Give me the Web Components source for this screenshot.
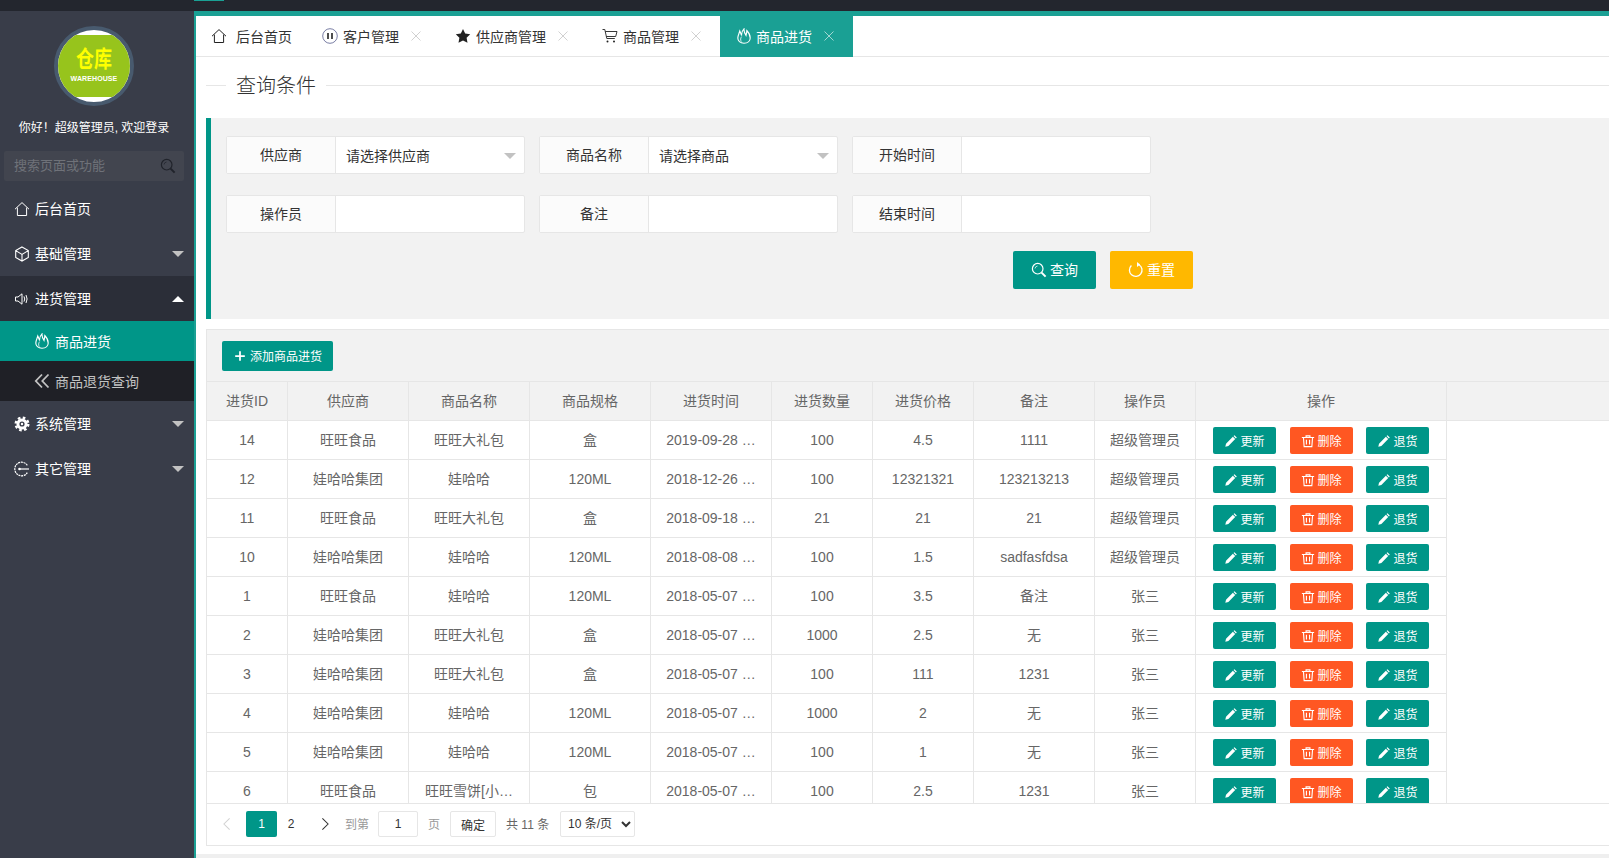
<!DOCTYPE html>
<html lang="zh-CN">
<head>
    <meta charset="UTF-8">
    <title>商品进货</title>
    <style>
        html, body {
            margin: 0;
            height: 100%;
            overflow: hidden;
            font-family: "Liberation Sans", "Noto Sans CJK SC", sans-serif;
            font-size: 14px;
            background: #fff;
        }
    </style>
</head>
<body>
    <admin-layout>
        <side-nav slot="side">
            <side-item icon="home" label="后台首页"></side-item>
            <side-item icon="cube" label="基础管理" arrow="down"></side-item>
            <side-item icon="speaker" label="进货管理" arrow="up" state="open"></side-item>
            <side-item icon="flame" label="商品进货" state="active"></side-item>
            <side-item icon="back" label="商品退货查询" state="child"></side-item>
            <side-item icon="gear" label="系统管理" arrow="down"></side-item>
            <side-item icon="other" label="其它管理" arrow="down"></side-item>
        </side-nav>

        <tab-strip>
            <tab-item icon="home" gap="9" style="padding-left:15px;padding-right:14px">后台首页</tab-item>
            <tab-item icon="pause" closable>客户管理</tab-item>
            <tab-item icon="star" closable>供应商管理</tab-item>
            <tab-item icon="cart" closable style="padding-right:18px">商品管理</tab-item>
            <tab-item icon="flame" gap="4" closable active style="padding-right:18px">商品进货</tab-item>
        </tab-strip>

        <section-title>查询条件</section-title>

        <query-panel>
            <form-field label="供应商" value="请选择供应商" select></form-field>
            <form-field label="商品名称" value="请选择商品" select></form-field>
            <form-field label="开始时间"></form-field>
            <form-field label="操作员"></form-field>
            <form-field label="备注"></form-field>
            <form-field label="结束时间"></form-field>
            <ui-button slot="actions" icon="search" color="#009688" size="lg">查询</ui-button>
            <ui-button slot="actions" icon="refresh" color="#ffb800" size="lg">重置</ui-button>
        </query-panel>

        <stock-table></stock-table>
    </admin-layout>

    <script>
        // 所有图标都放在这里，viewBox 统一 16x16
        const ICONS = {
            home: '<path d="M1 8.2 8 1.6l7 6.6M3.4 6.6v7.9h9.2V6.6" fill="none" stroke="currentColor"/>',
            cube: '<path d="M8 1l6.3 3.6v6.8L8 15l-6.3-3.6V4.6zM1.7 4.6 8 8.4l6.3-3.8M8 8.4V15" fill="none" stroke="currentColor" stroke-width="1.1"/>',
            speaker: '<path d="M1.5 6H4l4-3.2v10.4L4 10H1.5zM10 5.4q1.5 2.6 0 5.2M12 4q2.2 4 0 8" fill="none" stroke="currentColor"/>',
            flame: '<path d="M8 15.300C4 15.300 1.800 12.800 1.800 10 1.800 7.500 3.200 5.500 3.800 3 4.500 4.500 5 6 5.600 7.500 5.400 4.800 6.200 2.600 8 .8 7.800 3 8.800 5.500 10 7.500 10.400 5.800 10.800 4 10.800 2.500 13 4.800 14.200 7.400 14.200 10 14.200 12.800 12 15.300 8 15.300Z" fill="none" stroke="currentColor" stroke-width="1.100"/><path d="M5.300 13.600C4.200 11.800 4.600 10 5.600 8.600" fill="none" stroke="currentColor" stroke-width=".8"/>',
            back: '<path d="M8 1.500 1.800 8 8 14.500M14.500 1.500 8.300 8l6.200 6.500" fill="none" stroke="currentColor" stroke-width="1.800"/>',
            gear: '<circle cx="8" cy="8" r="4.100" fill="none" stroke="currentColor" stroke-width="3"/><circle cx="8" cy="8" r="6.300" fill="none" stroke="currentColor" stroke-width="2.400" stroke-dasharray="2.600 2.350"/><circle cx="8" cy="8" r="1.200" fill="currentColor"/>',
            other: '<path d="M13.300 4.300A6.800 6.800 0 1 0 13.300 11.700" fill="none" stroke="currentColor" stroke-width="1.200" stroke-dasharray="2 .7"/><path d="M5 8h10" stroke="currentColor" stroke-width="1.200"/><circle cx="5.500" cy="8" r="1.300" fill="currentColor"/>',
            pause: '<circle cx="8" cy="8" r="7.300" fill="none" stroke="#6a6f9a" stroke-width=".9"/><path d="M6 5v6M10 5v6" stroke="#222" stroke-width="1.600"/>',
            star: '<path d="M8 1l2.200 4.600 5 .7-3.600 3.500.9 5L8 12.400l-4.500 2.400.9-5L.8 6.300l5-.7z" fill="currentColor"/>',
            cart: '<path d="M.5 1.500h2.300l2 9h8M3.300 3.500h11.700l-1.300 5H4.400" fill="none" stroke="currentColor" stroke-width=".9"/><circle cx="5.500" cy="13.500" r="1" fill="currentColor"/><circle cx="12" cy="13.500" r="1" fill="currentColor"/>',
            search: '<circle cx="6.700" cy="6.700" r="5.300" fill="none" stroke="currentColor" stroke-width="1.200"/><path d="M4 6.500A3 3 0 0 1 6.500 4" fill="none" stroke="currentColor" stroke-width=".7"/><path d="M10.600 10.600l4 4" stroke="currentColor" stroke-width="2"/>',
            refresh: '<path d="M11 2.700A6.300 6.300 0 1 1 3.400 3.500" fill="none" stroke="currentColor" stroke-width="1.300"/><path d="M9 0v5l3.200-2.500z" fill="currentColor"/>',
            plus: '<path d="M8 2.500v11M2.500 8h11" stroke="currentColor" stroke-width="2"/>',
            pen: '<path d="M1.500 14.500l.8-3.500 7.800-7.900 2.700 2.700-7.800 7.900zM10.900 2.300l1-1 2.700 2.700-1 1z" fill="currentColor"/>',
            trash: '<path d="M1 4h14M5.800 4V2.200h4.400V4M2.800 4l.8 10.500h8.800l.8-10.500M6.200 6.500v5.500M9.800 6.500v5.500" fill="none" stroke="currentColor" stroke-width="1.300"/>',
            close: '<path d="M2 2l12 12M14 2 2 14" stroke="currentColor"/>',
            left: '<path d="M11 1.500 4.500 8l6.500 6.500" fill="none" stroke="currentColor" stroke-width="1.200"/>',
            right: '<path d="M5 1.500 11.500 8 5 14.500" fill="none" stroke="currentColor" stroke-width="1.200"/>'
        };

        class UiIcon extends HTMLElement {
            connectedCallback() {
                const size = this.getAttribute('size') || 16;
                this.attachShadow({ mode: 'open' }).innerHTML = `
                    <style>
                        :host { display: inline-flex; width: ${size}px; height: ${size}px; flex: none; }
                        svg { width: 100%; height: 100%; display: block; }
                    </style>
                    <svg viewBox="0 0 16 16">${ICONS[this.getAttribute('name')] || ''}</svg>`;
            }
        }

        class AdminLayout extends HTMLElement {
            constructor() {
                super();
                this.attachShadow({ mode: 'open' }).innerHTML = `
                    <style>
                        :host { display: grid; grid-template: 11px 847px / 194px 1415px; background: #fff; color: #333; }
                        .top { grid-column: 1 / 3; background: #23262e; }
                        .top i { display: block; width: 30px; height: 1px; margin-left: 194px; background: #1aa094; }
                        .main { border-left: 2px solid #1aa094; overflow: hidden; display: flex; flex-direction: column; }
                        .foot { flex: none; height: 4px; margin-top: auto; background: #efefef; }
                    </style>
                    <div class="top"><i></i></div>
                    <slot name="side"></slot>
                    <div class="main"><slot></slot><div class="foot"></div></div>`;
            }
        }

        class SideNav extends HTMLElement {
            constructor() {
                super();
                this.attachShadow({ mode: 'open' }).innerHTML = `
                    <style>
                        :host { display: block; background: #393d49; color: #fff; }
                        .logo { width: 72px; height: 72px; margin: 0 0 0 54px; border: 4px solid #485a6e; border-radius: 50%; background: #fff; overflow: hidden; position: relative; top: 15px; }
                        .logo div { margin-top: 5px; height: 62px; background: #97c41c; display: flex; flex-direction: column; align-items: center; }
                        .logo b { color: #ffff00; font-size: 18px; line-height: 24px; margin-top: 12px; transform: scaleY(1.25); }
                        .logo span { color: #fff; font: bold 7px/8px "Liberation Sans", sans-serif; margin-top: 4px; letter-spacing: .1px; }
                        .hello { margin: 28px 0 0; padding-right: 6px; height: 18px; line-height: 18px; text-align: center; font-size: 12px; }
                        .search { margin: 14px 10px 5px 4px; height: 30px; background: #42454f; border-radius: 2px; display: flex; align-items: center; justify-content: space-between; padding: 0 8px 0 10px; color: #6f7279; font-size: 13px; }
                        .search span { margin-bottom: 3px; }
                        .search ui-icon { color: #20232b; }
                    </style>
                    <div class="logo"><div><b>仓库</b><span>WAREHOUSE</span></div></div>
                    <p class="hello">你好！超级管理员, 欢迎登录</p>
                    <div class="search"><span>搜索页面或功能</span><ui-icon name="search" size="16"></ui-icon></div>
                    <slot></slot>`;
            }
        }

        class SideItem extends HTMLElement {
            connectedCallback() {
                const state = this.getAttribute('state') || '';
                const arrow = this.getAttribute('arrow');
                const sub = state === 'active' || state === 'child';
                const bg = { open: '#2b2e38', active: '#009688', child: '#1f2026' }[state] || 'transparent';
                this.attachShadow({ mode: 'open' }).innerHTML = `
                    <style>
                        :host { display: flex; align-items: center; box-sizing: border-box; height: ${sub ? 40 : 45}px; padding-left: ${sub ? 34 : 14}px; background: ${bg}; color: ${state === 'child' ? '#c2c2c2' : '#fff'}; }
                        span { margin-left: 5px; line-height: 20px; margin-top: ${sub ? 2 : 0}px; }
                        .arrow { margin-left: auto; margin-right: 10px; width: 0; height: 0; border: 6px solid transparent; }
                        .down { border-top-color: #c2c2c2; border-bottom: 0; }
                        .up { border-bottom-color: #fff; border-top: 0; }
                    </style>
                    <ui-icon name="${this.getAttribute('icon')}"></ui-icon>
                    <span>${this.getAttribute('label')}</span>
                    ${arrow ? `<i class="arrow ${arrow}"></i>` : ''}`;
            }
        }

        class TabStrip extends HTMLElement {
            constructor() {
                super();
                this.attachShadow({ mode: 'open' }).innerHTML = `
                    <style>
                        :host { display: flex; flex: none; box-sizing: border-box; height: 46px; border-top: 5px solid #1aa094; border-bottom: 1px solid #e6e6e6; }
                    </style>
                    <slot></slot>`;
            }
        }

        class TabItem extends HTMLElement {
            connectedCallback() {
                const active = this.hasAttribute('active');
                this.attachShadow({ mode: 'open' }).innerHTML = `
                    <style>
                        :host { display: flex; align-items: center; height: 41px; box-sizing: border-box; padding: 0 17px 2px 16px; background: ${active ? '#1aa094' : 'transparent'}; color: ${active ? '#fff' : '#333'}; }
                        .txt { margin-left: ${this.getAttribute('gap') || 5}px; white-space: nowrap; }
                        .x { margin-left: 11px; color: ${active ? '#cfe9e6' : '#c2c2c2'}; }
                        .ic { color: ${active ? '#fff' : '#222'}; }
                    </style>
                    <ui-icon class="ic" name="${this.getAttribute('icon')}"></ui-icon>
                    <span class="txt"><slot></slot></span>
                    ${this.hasAttribute('closable') ? '<ui-icon class="x" name="close" size="12"></ui-icon>' : ''}`;
            }
        }

        class SectionTitle extends HTMLElement {
            constructor() {
                super();
                this.attachShadow({ mode: 'open' }).innerHTML = `
                    <style>
                        :host { display: flex; align-items: center; flex: none; box-sizing: border-box; height: 61px; padding-bottom: 4px; margin-left: 10px; font-size: 20px; font-weight: 300; color: #333; }
                        i { height: 1px; background: #e6e6e6; }
                        i.a { width: 20px; margin-right: 10px; }
                        i.b { flex: 1; margin-left: 10px; }
                        span { position: relative; top: -1px; }
                    </style>
                    <i class="a"></i><span><slot></slot></span><i class="b"></i>`;
            }
        }

        class QueryPanel extends HTMLElement {
            constructor() {
                super();
                this.attachShadow({ mode: 'open' }).innerHTML = `
                    <style>
                        :host { display: block; flex: none; box-sizing: border-box; height: 201px; margin-left: 10px; padding: 18px 0 0 15px; border-left: 5px solid #009688; background: #f2f2f2; }
                        .grid { display: grid; grid-template-columns: 299px 299px 299px; column-gap: 14px; row-gap: 21px; }
                        .actions { display: flex; gap: 14px; margin: 18px 0 0 787px; }
                    </style>
                    <div class="grid"><slot></slot></div>
                    <div class="actions"><slot name="actions"></slot></div>`;
            }
        }

        class FormField extends HTMLElement {
            connectedCallback() {
                const select = this.hasAttribute('select');
                this.attachShadow({ mode: 'open' }).innerHTML = `
                    <style>
                        :host { display: flex; height: 38px; box-sizing: border-box; border: 1px solid #e6e6e6; border-radius: 2px; background: #fff; }
                        label { width: 108px; flex: none; background: #fbfbfb; border-right: 1px solid #e6e6e6; text-align: center; line-height: 36px; color: #333; }
                        .val { flex: 1; padding-left: 10px; display: flex; justify-content: space-between; align-items: center; color: #333; }
                        .val i { width: 0; height: 0; margin-right: 8px; margin-top: 2px; border: 6px solid transparent; border-top-color: #c2c2c2; border-bottom: 0; }
                    </style>
                    <label>${this.getAttribute('label')}</label>
                    <div class="val">${this.getAttribute('value') ? `<span>${this.getAttribute('value')}</span>` : ''}${select ? '<i></i>' : ''}</div>`;
            }
        }

        class UiButton extends HTMLElement {
            connectedCallback() {
                const size = this.getAttribute('size');
                const big = size === 'lg';
                const w = { lg: 83, md: 111 }[size] || 63;
                const h = { lg: 38, md: 30 }[size] || 27;
                const iconSize = this.getAttribute('icon-size') || (big ? 16 : 14);
                this.attachShadow({ mode: 'open' }).innerHTML = `
                    <style>
                        :host { display: inline-flex; align-items: center; justify-content: center; flex: none; box-sizing: border-box; width: ${w}px; height: ${h}px; border-radius: 2px; background: ${this.getAttribute('color')}; color: #fff; font-size: ${big ? 14 : 12}px; white-space: nowrap; }
                        span { margin-left: ${size ? 3 : 2}px; ${size ? 'margin-bottom: 2px;' : 'margin-top: 2px;'} }
                    </style>
                    <ui-icon name="${this.getAttribute('icon')}" size="${iconSize}"></ui-icon><span><slot></slot></span>`;
            }
        }

        class StockTable extends HTMLElement {
            constructor() {
                super();
                this.attachShadow({ mode: 'open' });
                this.columns = ['进货ID', '供应商', '商品名称', '商品规格', '进货时间', '进货数量', '进货价格', '备注', '操作员'];
                this.rows = [
                    ['14', '旺旺食品', '旺旺大礼包', '盒', '2019-09-28 …', '100', '4.5', '1111', '超级管理员'],
                    ['12', '娃哈哈集团', '娃哈哈', '120ML', '2018-12-26 …', '100', '12321321', '123213213', '超级管理员'],
                    ['11', '旺旺食品', '旺旺大礼包', '盒', '2018-09-18 …', '21', '21', '21', '超级管理员'],
                    ['10', '娃哈哈集团', '娃哈哈', '120ML', '2018-08-08 …', '100', '1.5', 'sadfasfdsa', '超级管理员'],
                    ['1', '旺旺食品', '娃哈哈', '120ML', '2018-05-07 …', '100', '3.5', '备注', '张三'],
                    ['2', '娃哈哈集团', '旺旺大礼包', '盒', '2018-05-07 …', '1000', '2.5', '无', '张三'],
                    ['3', '娃哈哈集团', '旺旺大礼包', '盒', '2018-05-07 …', '100', '111', '1231', '张三'],
                    ['4', '娃哈哈集团', '娃哈哈', '120ML', '2018-05-07 …', '1000', '2', '无', '张三'],
                    ['5', '娃哈哈集团', '娃哈哈', '120ML', '2018-05-07 …', '100', '1', '无', '张三'],
                    ['6', '旺旺食品', '旺旺雪饼[小…', '包', '2018-05-07 …', '100', '2.5', '1231', '张三']
                ];
            }

            connectedCallback() {
                const cell = t => `<div class="c">${t}</div>`;
                const ops = `<div class="c ops">
                    <ui-button icon="pen" color="#009688">更新</ui-button>
                    <ui-button class="del" icon="trash" color="#ff5722">删除</ui-button>
                    <ui-button icon="pen" color="#009688">退货</ui-button>
                </div>`;
                this.shadowRoot.innerHTML = `
                    <style>
                        :host { display: block; flex: none; box-sizing: border-box; height: 517px; margin: 10px 0 0 10px; border: 1px solid #e6e6e6; border-right: 0; color: #666; }
                        .tool { box-sizing: border-box; height: 52px; padding: 11px 15px 0; background: #f2f2f2; border-bottom: 1px solid #e6e6e6; }
                        .row { display: grid; grid-template-columns: 81px repeat(4, 121px) 101px 101px 121px 101px 251px; width: 1240px; }
                        .head-wrap { display: flex; background: #f2f2f2; border-bottom: 1px solid #e6e6e6; height: 39px; box-sizing: border-box; }
                        .head-wrap .row { flex: none; }
                        .body { height: 382px; overflow: hidden; border-bottom: 1px solid #e6e6e6; box-sizing: content-box; }
                        .c { box-sizing: border-box; height: 39px; padding: 0 15px; border-right: 1px solid #e6e6e6; border-bottom: 1px solid #e6e6e6; line-height: 38px; text-align: center; white-space: nowrap; overflow: hidden; }
                        .head-wrap .c { height: 38px; border-bottom: 0; }
                        .head-wrap .tail { flex: 1; }
                        .ops { display: flex; gap: 13px; padding: 6px 0 0 17px; overflow: visible; }
                        .del { margin-left: 1px; }
                        .pages { display: flex; align-items: center; height: 41px; padding-bottom: 1px; box-sizing: border-box; font-size: 12px; color: #333; }
                        .pages ui-icon { color: #333; }
                        .box { display: flex; align-items: center; justify-content: center; height: 26px; }
                        .prev { width: 39px; }
                        .prev ui-icon { color: #d2d2d2; }
                        .cur { width: 31px; background: #009688; color: #fff; border-radius: 2px; }
                        .two { width: 28px; }
                        .next { width: 40px; }
                        .mute { color: #999; padding-bottom: 2px; }
                        input, select, button { box-sizing: border-box; height: 26px; margin: 0 0 0 10px; border: 1px solid #e6e6e6; border-radius: 2px; background: #fff; color: #333; font: 12px "Liberation Sans", "Noto Sans CJK SC", sans-serif; }
                        input { width: 40px; margin-left: 9px; text-align: center; padding: 0; }
                        button { width: 46px; padding: 0; }
                        .total { width: 44px; margin-left: 10px; padding-bottom: 2px; white-space: nowrap; color: #666; }
                        select { width: 75px; padding: 0 0 0 3px; }
                        .pg { margin-left: 10px; }
                    </style>
                    <div class="tool"><ui-button icon="plus" color="#009688" size="md" icon-size="14">添加商品进货</ui-button></div>
                    <div class="head-wrap">
                        <div class="row">${this.columns.map(cell).join('')}${cell('操作')}</div>
                        <div class="tail"></div>
                    </div>
                    <div class="body">
                        ${this.rows.map(r => `<div class="row">${r.map(cell).join('')}${ops}</div>`).join('')}
                    </div>
                    <div class="pages">
                        <span class="box prev"><ui-icon name="left" size="14"></ui-icon></span>
                        <span class="box cur">1</span>
                        <span class="box two">2</span>
                        <span class="box next"><ui-icon name="right" size="14"></ui-icon></span>
                        <span class="mute">到第</span>
                        <input value="1">
                        <span class="mute pg">页</span>
                        <button>确定</button>
                        <span class="total">共 11 条</span>
                        <select><option>10 条/页</option><option>20 条/页</option></select>
                    </div>`;
            }
        }

        customElements.define('ui-icon', UiIcon);
        customElements.define('admin-layout', AdminLayout);
        customElements.define('side-nav', SideNav);
        customElements.define('side-item', SideItem);
        customElements.define('tab-strip', TabStrip);
        customElements.define('tab-item', TabItem);
        customElements.define('section-title', SectionTitle);
        customElements.define('query-panel', QueryPanel);
        customElements.define('form-field', FormField);
        customElements.define('ui-button', UiButton);
        customElements.define('stock-table', StockTable);
    </script>
</body>
</html>
